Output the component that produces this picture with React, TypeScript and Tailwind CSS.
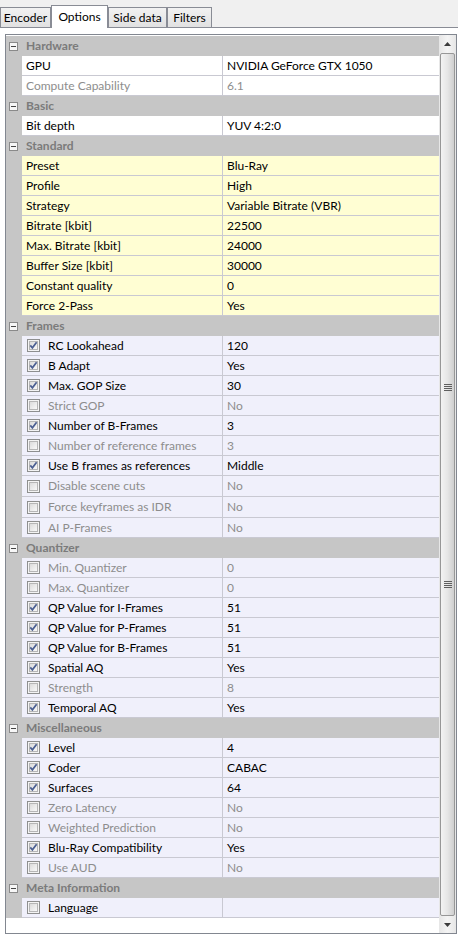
import React, { JSX } from 'react';

type Prop = {
    name: string;
    value: string;
    check?: boolean;
    enabled?: boolean;
    tall?: boolean;
};

type Category = {
    title: string;
    tone: 'white' | 'yellow' | 'lavender';
    props: Prop[];
};

const categories: Category[] = [
    {
        title: 'Hardware',
        tone: 'white',
        props: [
            { name: 'GPU', value: 'NVIDIA GeForce GTX 1050', enabled: true },
            { name: 'Compute Capability', value: '6.1', enabled: false },
        ],
    },
    {
        title: 'Basic',
        tone: 'white',
        props: [{ name: 'Bit depth', value: 'YUV 4:2:0', enabled: true }],
    },
    {
        title: 'Standard',
        tone: 'yellow',
        props: [
            { name: 'Preset', value: 'Blu-Ray', enabled: true },
            { name: 'Profile', value: 'High', enabled: true },
            { name: 'Strategy', value: 'Variable Bitrate (VBR)', enabled: true },
            { name: 'Bitrate [kbit]', value: '22500', enabled: true },
            { name: 'Max. Bitrate [kbit]', value: '24000', enabled: true },
            { name: 'Buffer Size [kbit]', value: '30000', enabled: true },
            { name: 'Constant quality', value: '0', enabled: true },
            { name: 'Force 2-Pass', value: 'Yes', enabled: true },
        ],
    },
    {
        title: 'Frames',
        tone: 'lavender',
        props: [
            { name: 'RC Lookahead', value: '120', check: true, enabled: true },
            { name: 'B Adapt', value: 'Yes', check: true, enabled: true },
            { name: 'Max. GOP Size', value: '30', check: true, enabled: true },
            { name: 'Strict GOP', value: 'No', check: false, enabled: false },
            { name: 'Number of B-Frames', value: '3', check: true, enabled: true },
            { name: 'Number of reference frames', value: '3', check: false, enabled: false },
            { name: 'Use B frames as references', value: 'Middle', check: true, enabled: true },
            { name: 'Disable scene cuts', value: 'No', check: false, enabled: false, tall: true },
            { name: 'Force keyframes as IDR', value: 'No', check: false, enabled: false, tall: true },
            { name: 'AI P-Frames', value: 'No', check: false, enabled: false },
        ],
    },
    {
        title: 'Quantizer',
        tone: 'lavender',
        props: [
            { name: 'Min. Quantizer', value: '0', check: false, enabled: false },
            { name: 'Max. Quantizer', value: '0', check: false, enabled: false },
            { name: 'QP Value for I-Frames', value: '51', check: true, enabled: true },
            { name: 'QP Value for P-Frames', value: '51', check: true, enabled: true },
            { name: 'QP Value for B-Frames', value: '51', check: true, enabled: true },
            { name: 'Spatial AQ', value: 'Yes', check: true, enabled: true },
            { name: 'Strength', value: '8', check: false, enabled: false },
            { name: 'Temporal AQ', value: 'Yes', check: true, enabled: true },
        ],
    },
    {
        title: 'Miscellaneous',
        tone: 'lavender',
        props: [
            { name: 'Level', value: '4', check: true, enabled: true },
            { name: 'Coder', value: 'CABAC', check: true, enabled: true },
            { name: 'Surfaces', value: '64', check: true, enabled: true },
            { name: 'Zero Latency', value: 'No', check: false, enabled: false },
            { name: 'Weighted Prediction', value: 'No', check: false, enabled: false },
            { name: 'Blu-Ray Compatibility', value: 'Yes', check: true, enabled: true },
            { name: 'Use AUD', value: 'No', check: false, enabled: false },
        ],
    },
    {
        title: 'Meta Information',
        tone: 'lavender',
        props: [{ name: 'Language', value: '', check: false, enabled: true }],
    },
];

const toneBg: Record<Category['tone'], string> = {
    white: 'bg-white',
    yellow: 'bg-[#fffed3]',
    lavender: 'bg-[#f0f0fb]',
};

function CheckBox({ checked }: { checked: boolean }): JSX.Element {
    return (
        <svg width="13" height="13" viewBox="0 0 13 13" className="shrink-0">
            <defs>
                <linearGradient id="cbg" x1="0" y1="0" x2="1" y2="1">
                    <stop offset="0" stopColor="#d9d9d9" />
                    <stop offset="1" stopColor="#fbfbfb" />
                </linearGradient>
            </defs>
            <rect x="0.5" y="0.5" width="12" height="12" fill="#f4f4f4" stroke="#8e8f8f" />
            <rect x="2.5" y="2.5" width="8" height="8" fill="url(#cbg)" stroke="#b6b6b6" />
            {checked && (
                <path d="M3.3 6.4 L5.4 8.8 L9.6 3.2" fill="none" stroke="#4b5f92" strokeWidth="1.7" />
            )}
        </svg>
    );
}

function CollapseBox(): JSX.Element {
    return (
        <svg width="9" height="9" viewBox="0 0 9 9" className="shrink-0">
            <rect x="0.5" y="0.5" width="8" height="8" fill="#f7f7f7" stroke="#8a8a8a" />
            <path d="M2 4.5 H7" stroke="#444" strokeWidth="1" />
        </svg>
    );
}

function Tab({ label, active }: { label: string; active?: boolean }): JSX.Element {
    if (active) {
        return (
            <div className="relative -mb-px mt-[5px] flex h-[23px] w-[57px] items-start justify-center border border-b-0 border-[#898c95] bg-white pt-[5px] text-black">
                {label}
            </div>
        );
    }
    return (
        <div className="mt-[7px] flex h-[20px] items-start justify-center border border-b-0 border-[#898c95] bg-gradient-to-b from-[#f2f2f2] to-[#e1e1e1] pt-[4px] text-black">
            {label}
        </div>
    );
}

function Grip(): JSX.Element {
    return (
        <div className="flex flex-col gap-[1px]">
            <div className="h-px w-[8px] bg-[#5f5f5f]" />
            <div className="h-px w-[8px] bg-[#5f5f5f]" />
            <div className="h-px w-[8px] bg-[#5f5f5f]" />
            <div className="h-px w-[8px] bg-[#5f5f5f]" />
        </div>
    );
}

function ScrollBar(): JSX.Element {
    return (
        <div className="flex w-[17px] flex-col bg-gradient-to-r from-[#e6e6e6] via-[#f4f4f4] to-[#e6e6e6]">
            <div className="flex h-[18px] items-center justify-center">
                <svg width="7" height="4" viewBox="0 0 7 4">
                    <path d="M0 4 L3.5 0 L7 4 Z" fill="#3c3c3c" />
                </svg>
            </div>
            <div className="mx-[1px] flex flex-1 flex-col items-center justify-between rounded-[2px] border border-[#979797] bg-gradient-to-r from-[#f3f3f3] via-[#e6e6e6] to-[#cfcfcf] pb-[327px] pt-[330px]">
                <Grip />
                <Grip />
            </div>
            <div className="flex h-[17px] items-center justify-center">
                <svg width="7" height="4" viewBox="0 0 7 4">
                    <path d="M0 0 L7 0 L3.5 4 Z" fill="#3c3c3c" />
                </svg>
            </div>
        </div>
    );
}

function PropertyRow({ prop, tone }: { prop: Prop; tone: Category['tone'] }): JSX.Element {
    const textColor = prop.enabled ? 'text-black' : 'text-[#8d8d8d]';
    return (
        <div className={`flex ${prop.tall ? 'h-[21px]' : 'h-[20px]'}`}>
            <div className="w-[16px] shrink-0 bg-[#c6c6c6]" />
            <div className={`flex w-[201px] shrink-0 items-center border-b border-r border-[#c9c9d2] ${toneBg[tone]}`}>
                {prop.check !== undefined ? (
                    <div className="flex items-center">
                        <span className="ml-[5px] mr-[8px] flex">
                            <CheckBox checked={prop.check} />
                        </span>
                        <span className={textColor}>{prop.name}</span>
                    </div>
                ) : (
                    <span className={`pl-[4px] ${textColor}`}>{prop.name}</span>
                )}
            </div>
            <div className={`flex flex-1 items-center border-b border-[#c9c9d2] pl-[4px] ${toneBg[tone]} ${textColor}`}>
                {prop.value}
            </div>
        </div>
    );
}

export default function App(): JSX.Element {
    return (
        <div className="h-[938px] w-[458px] overflow-hidden bg-white text-[12px] leading-none" style={{ fontFamily: 'Lato, "Open Sans", sans-serif' }}>
            <div className="flex h-[28px] border-b border-[#898c95] bg-[#f0f0f0]">
                <div className="w-[51px]"><Tab label="Encoder" /></div>
                <Tab label="Options" active />
                <div className="w-[59px]"><Tab label="Side data" /></div>
                <div className="w-[45px]"><Tab label="Filters" /></div>
            </div>

            <div className="ml-[5px] mt-[6px] flex h-[900px] w-[452px] border border-[#828790] bg-white">
                <div className="flex flex-1 flex-col pt-[1px]">
                    {categories.map((cat) => (
                        <div key={cat.title}>
                            <div className="flex h-[20px] items-center bg-[#c6c6c6]">
                                <span className="ml-[3px] mr-[8px] flex">
                                    <CollapseBox />
                                </span>
                                <span className="font-bold text-[#7b7b7b]">{cat.title}</span>
                            </div>
                            {cat.props.map((p) => (
                                <PropertyRow key={p.name} prop={p} tone={cat.tone} />
                            ))}
                        </div>
                    ))}
                </div>
                <ScrollBar />
            </div>
        </div>
    );
}
